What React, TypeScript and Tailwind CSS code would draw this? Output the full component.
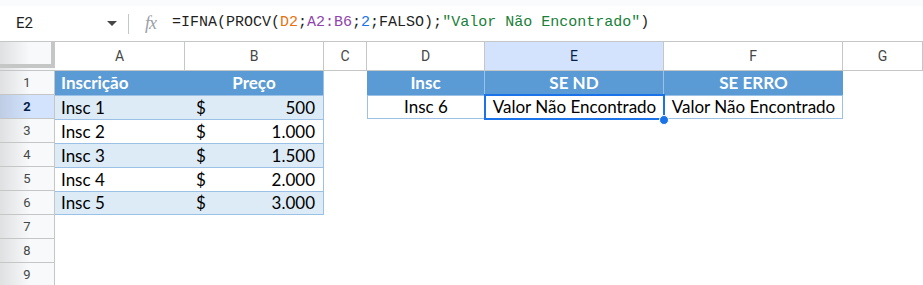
import React from "react";

const W = {
  hdr: "w-[55px]",
  A: "w-[130px]",
  B: "w-[139px]",
  C: "w-[43px]",
  D: "w-[118px]",
  E: "w-[179px]",
  F: "w-[179px]",
  G: "w-[80px]",
};

const cellFont = { fontFamily: "Lato, 'Open Sans', sans-serif" } as React.CSSProperties;

function RowHeader({ n, active }: { n: number; active?: boolean }) {
  return (
    <div
      className={`relative ${W.hdr} h-full shrink-0 flex items-center justify-center border-r border-b border-[#c4c7c5] ${
        active ? "bg-[#d3e3fd] text-[#041e49] font-bold" : "bg-[#f8f9fa] text-[#444746]"
      } text-[13px]`}
      style={{ fontFamily: "Roboto, Arial, sans-serif" }}
    >
      <div className="absolute inset-y-0 left-0 w-[30px] bg-gradient-to-r from-black/10 to-transparent" />
      <span className="relative">{n}</span>
    </div>
  );
}

const rowsAB = [
  { a: "Insc 1", v: "500" },
  { a: "Insc 2", v: "1.000" },
  { a: "Insc 3", v: "1.500" },
  { a: "Insc 4", v: "2.000" },
  { a: "Insc 5", v: "3.000" },
];

export default function App() {
  return (
    <div className="w-[923px] h-[285px] overflow-hidden bg-white text-black relative">
      {/* top strip */}
      <div className="h-[6px] bg-[#f9fbfd]" />
      {/* formula bar */}
      <div className="h-[36px] flex items-center border-b border-[#c4c7c5] bg-white">
        <div
          className="w-[128px] flex items-center pl-[16px] pr-[10px] justify-between text-[15px] text-[#1f1f1f]"
          style={{ fontFamily: "Roboto, Arial, sans-serif" }}
        >
          <span>E2</span>
          <svg width="10" height="5" viewBox="0 0 10 5" className="mr-[1px]">
            <path d="M0 0 L10 0 L5 5 Z" fill="#444746" />
          </svg>
        </div>
        <div className="w-px h-[20px] bg-[#c4c7c5]" />
        <div
          className="w-[43px] flex justify-center text-[18px] italic text-[#9aa0a6]"
          style={{ fontFamily: "'Liberation Serif', serif" }}
        >
          <span className="tracking-[-1px]">fx</span>
        </div>
        <div
          className="text-[15px] whitespace-pre text-[#1f1f1f]"
          style={{ fontFamily: "'Liberation Mono', 'DejaVu Sans Mono', monospace" }}
        >
          <span>=IFNA(PROCV(</span>
          <span className="text-[#e8710a]">D2</span>
          <span>;</span>
          <span className="text-[#8e44ad]">A2:B6</span>
          <span>;</span>
          <span className="text-[#1a73e8]">2</span>
          <span>;FALSO);</span>
          <span className="text-[#188038]">"Valor Não Encontrado"</span>
          <span>)</span>
        </div>
      </div>

      {/* column headers */}
      <div
        className="h-[29px] flex text-[14px] text-[#444746]"
        style={{ fontFamily: "Roboto, Arial, sans-serif" }}
      >
        <div className={`${W.hdr} h-full shrink-0 relative bg-[#f8f9fa]`}>
          <div className="absolute inset-y-0 left-0 w-[30px] bg-gradient-to-r from-black/10 to-transparent" />
          <div className="absolute top-0 left-0 w-[55px] h-[26px] border-r-4 border-b-4 border-[#c4c7c5]" />
          <div className="absolute bottom-0 left-0 w-[55px] h-px bg-[#c4c7c5]" />
        </div>
        {[
          ["A", W.A, false],
          ["B", W.B, false],
          ["C", W.C, false],
          ["D", W.D, false],
          ["E", W.E, true],
          ["F", W.F, false],
          ["G", W.G, false],
        ].map(([l, w, act]) => (
          <div
            key={l as string}
            className={`${w} shrink-0 h-full flex items-center justify-center border-r border-b border-[#c4c7c5] ${
              act ? "bg-[#d3e3fd] text-[#041e49]" : "bg-white"
            }`}
          >
            {l as string}
          </div>
        ))}
      </div>

      {/* row 1 */}
      <div className="h-[24px] flex" style={cellFont}>
        <RowHeader n={1} />
        <div className={`${W.A} shrink-0 bg-[#5b9bd5] text-white font-bold text-[17px] pl-[6px] flex items-center`}>
          Inscrição
        </div>
        <div className={`${W.B} shrink-0 bg-[#5b9bd5] text-white font-bold text-[17px] flex items-center justify-center border-r border-[#9bc2e6]`}>
          Preço
        </div>
        <div className={`${W.C} shrink-0`} />
        <div className={`${W.D} shrink-0 bg-[#5b9bd5] text-white font-bold text-[17px] flex items-center justify-center border-r border-[#9bc2e6]`}>
          Insc
        </div>
        <div className={`${W.E} shrink-0 bg-[#5b9bd5] text-white font-bold text-[17px] flex items-center justify-center border-r border-[#9bc2e6]`}>
          SE ND
        </div>
        <div className={`${W.F} shrink-0 bg-[#5b9bd5] text-white font-bold text-[17px] flex items-center justify-center`}>
          SE ERRO
        </div>
      </div>

      {/* rows 2-6 */}
      {rowsAB.map((r, i) => {
        const band = i % 2 === 0;
        const last = i === 4;
        return (
          <div key={i} className="h-[24px] flex" style={cellFont}>
            <RowHeader n={i + 2} active={i === 0} />
            <div
              className={`${W.A} shrink-0 ${band ? "bg-[#ddebf7]" : "bg-white"} border-t ${
                last ? "border-b" : ""
              } border-[#9bc2e6] text-[17px] pl-[6px] flex items-center`}
            >
              {r.a}
            </div>
            <div
              className={`${W.B} shrink-0 ${band ? "bg-[#ddebf7]" : "bg-white"} border-t border-r ${
                last ? "border-b" : ""
              } border-[#9bc2e6] text-[17px] pl-[11px] pr-[8px] flex items-center justify-between`}
            >
              <span>$</span>
              <span>{r.v}</span>
            </div>
            {i === 0 && (
              <>
                <div className={`${W.C} shrink-0`} />
                <div className={`${W.D} shrink-0 border border-[#9bc2e6] text-[17px] flex items-center justify-center`}>
                  Insc 6
                </div>
                <div className={`${W.E} shrink-0 relative text-[17px] flex items-center justify-center whitespace-nowrap`}>
                  Valor Não Encontrado
                  <div className="absolute -top-px -left-px -right-px -bottom-px border-2 border-[#1a73e8] pointer-events-none" />
                  <div className="absolute -right-[5px] -bottom-[6px] w-[10px] h-[10px] rounded-full bg-[#1a73e8] border border-white z-10" />
                </div>
                <div className={`${W.F} shrink-0 border border-[#9bc2e6] text-[17px] flex items-center justify-center whitespace-nowrap`}>
                  Valor Não Encontrado
                </div>
              </>
            )}
          </div>
        );
      })}

      {/* rows 7-9 */}
      {[7, 8, 9].map((n) => (
        <div key={n} className="h-[24px] flex">
          <RowHeader n={n} />
        </div>
      ))}
    </div>
  );
}
